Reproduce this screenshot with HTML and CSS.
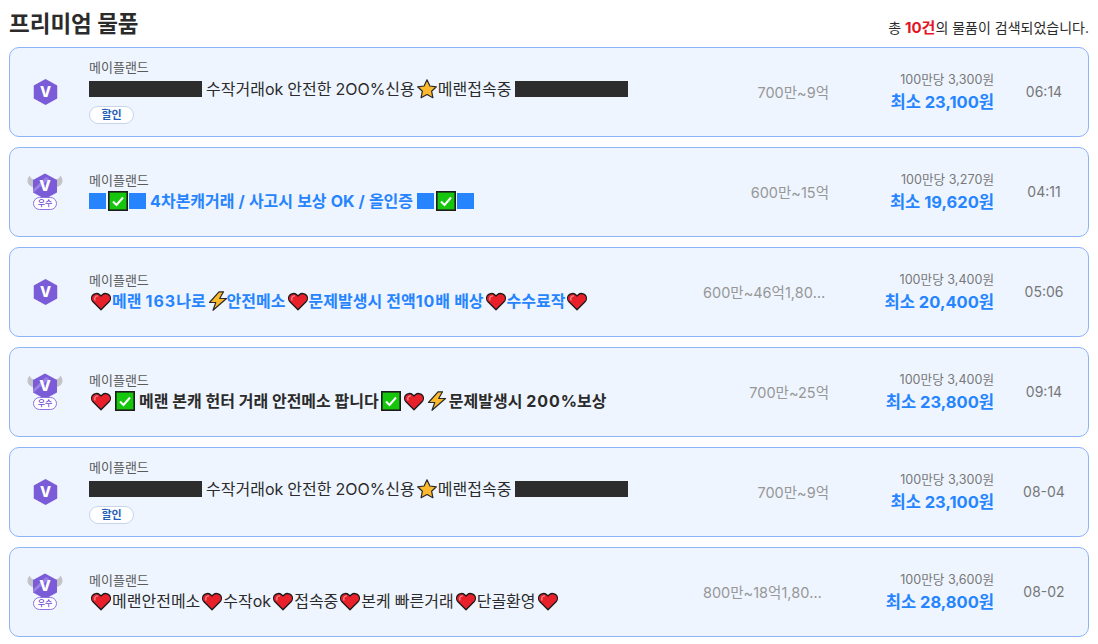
FILE: index.html
```html
<!DOCTYPE html>
<html lang="ko">
  <head>
    <meta charset="UTF-8" />
    <title>프리미엄 물품</title>
    <meta name="viewport" content="width=device-width, initial-scale=1.0" />
    <link rel="stylesheet" href="styles.css">
  </head>
  <body>
    <svg class="sprites" aria-hidden="true">
      <symbol id="hex" viewBox="0 0 26 28">
        <path d="M13 .5 25.200 7.200V20.800L13 27.500.8 20.800V7.200Z" fill="#7a5bd8"/>
        <text x="13" y="19.500" class="hex-v" text-anchor="middle">V</text>
      </symbol>
      <symbol id="hex-wing" viewBox="0 0 36 26">
        <path d="M7 14C3 14 .5 11 .5 7.500.5 5.500 1.500 3.500 3 2.500 3 4.500 4.500 6 7 6.500Z" fill="#c4c4c8"/>
        <path d="M29 14c4 0 6.500-3 6.500-6.500 0-2-1-4-2.500-5 0 2-1.500 3.500-4 4Z" fill="#c4c4c8"/>
        <path d="M18 .5 30 7V19.500L18 26 6 19.500V7Z" fill="#7a5bd8"/>
        <path d="M6 16.500 19 4l3.500 2L6 20Z" fill="#9a83e4"/>
        <text x="18" y="17.500" class="hex-v" text-anchor="middle">V</text>
      </symbol>
      <symbol id="star" viewBox="0 0 20 20">
        <path d="M10 .8 12.900 7l6.500.8-4.800 4.400 1.300 6.500L10 15.500l-5.900 3.200 1.300-6.500L.6 7.800 7.100 7Z" fill="#fdb92e" stroke="#2a2a2a" stroke-width="1.200" stroke-linejoin="round"/>
      </symbol>
      <symbol id="heart" viewBox="0 0 20 20">
        <path d="M10 18.800 2 10.800C.2 9 .2 6 1.700 4.200 3.400 2.300 6.500 1.900 8.400 3.500L10 5l1.600-1.500c1.900-1.600 5-1.200 6.700.7 1.500 1.800 1.500 4.800-.3 6.600Z" fill="#e8202a" stroke="#1a1a1a" stroke-width="1.300" stroke-linejoin="round"/>
        <path d="M4 9c-.8-2 .2-4 2.500-4.200" fill="none" stroke="#f58a8f" stroke-width="1.300" stroke-linecap="round"/>
      </symbol>
      <symbol id="bolt" viewBox="0 0 20 20">
        <path d="M11 .8 1.500 11.500h6.300L5 19.300 18.500 7.500h-6.800L15.500.8Z" fill="#fcb92c" stroke="#2a2a2a" stroke-width="1.200" stroke-linejoin="round"/>
      </symbol>
      <symbol id="check" viewBox="0 0 20 20">
        <rect x=".8" y=".8" width="18.400" height="18.400" fill="#16c60c" stroke="#1d1d1d" stroke-width="1.600"/>
        <path d="M5 10.500 8.500 14 15 6.500" fill="none" stroke="#fff" stroke-width="2"/>
      </symbol>
    </svg>

    <header class="list-head">
      <h2>프리미엄 물품</h2>
      <p>총 <b>10건</b>의 물품이 검색되었습니다.</p>
    </header>

    <main class="list">
      <article class="item">
        <div class="grade"><svg class="hex"><use href="#hex"/></svg></div>
        <div class="info">
          <div class="game">메이플랜드</div>
          <div class="title has-tag"><i class="block"></i> 수작거래ok 안전한 2OO%신용<svg class="emo"><use href="#star"/></svg>메랜접속중 <i class="block"></i></div>
          <div class="tags"><span class="tag">할인</span></div>
        </div>
        <div class="range">700만~9억</div>
        <div class="price"><span>100만당 3,300원</span><strong>최소 23,100원</strong></div>
        <div class="time">06:14</div>
      </article>

      <article class="item">
        <div class="grade good"><svg class="hex-wing"><use href="#hex-wing"/></svg><span class="good-label">우수</span></div>
        <div class="info">
          <div class="game">메이플랜드</div>
          <div class="title blue strong"><i class="sq"></i><svg class="emo"><use href="#check"/></svg><i class="sq"></i> 4차본캐거래 / 사고시 보상 OK / 올인증 <i class="sq"></i><svg class="emo"><use href="#check"/></svg><i class="sq"></i></div>
        </div>
        <div class="range">600만~15억</div>
        <div class="price"><span>100만당 3,270원</span><strong>최소 19,620원</strong></div>
        <div class="time">04:11</div>
      </article>

      <article class="item">
        <div class="grade"><svg class="hex"><use href="#hex"/></svg></div>
        <div class="info">
          <div class="game">메이플랜드</div>
          <div class="title blue strong"><svg class="emo"><use href="#heart"/></svg>메랜 <em>163</em>나로<svg class="emo bolt"><use href="#bolt"/></svg>안전메소<svg class="emo"><use href="#heart"/></svg>문제발생시 전액<em>10</em>배 배상<svg class="emo"><use href="#heart"/></svg>수수료작<svg class="emo"><use href="#heart"/></svg></div>
        </div>
        <div class="range">600만~46억1,800만</div>
        <div class="price"><span>100만당 3,400원</span><strong>최소 20,400원</strong></div>
        <div class="time">05:06</div>
      </article>

      <article class="item">
        <div class="grade good"><svg class="hex-wing"><use href="#hex-wing"/></svg><span class="good-label">우수</span></div>
        <div class="info">
          <div class="game">메이플랜드</div>
          <div class="title strong"><svg class="emo"><use href="#heart"/></svg><i class="gap"></i><svg class="emo"><use href="#check"/></svg><i class="gap wide"></i>메랜 본캐 헌터 거래 안전메소 팝니다<svg class="emo"><use href="#check"/></svg><svg class="emo"><use href="#heart"/></svg><svg class="emo bolt"><use href="#bolt"/></svg><i class="gap wide"></i>문제발생시 <em>200</em>%보상</div>
        </div>
        <div class="range">700만~25억</div>
        <div class="price"><span>100만당 3,400원</span><strong>최소 23,800원</strong></div>
        <div class="time">09:14</div>
      </article>

      <article class="item">
        <div class="grade"><svg class="hex"><use href="#hex"/></svg></div>
        <div class="info">
          <div class="game">메이플랜드</div>
          <div class="title has-tag"><i class="block"></i> 수작거래ok 안전한 2OO%신용<svg class="emo"><use href="#star"/></svg>메랜접속중 <i class="block"></i></div>
          <div class="tags"><span class="tag">할인</span></div>
        </div>
        <div class="range">700만~9억</div>
        <div class="price"><span>100만당 3,300원</span><strong>최소 23,100원</strong></div>
        <div class="time">08-04</div>
      </article>

      <article class="item">
        <div class="grade good"><svg class="hex-wing"><use href="#hex-wing"/></svg><span class="good-label">우수</span></div>
        <div class="info">
          <div class="game">메이플랜드</div>
          <div class="title"><svg class="emo"><use href="#heart"/></svg>메랜안전메소<svg class="emo"><use href="#heart"/></svg>수작ok<svg class="emo"><use href="#heart"/></svg>접속중<svg class="emo"><use href="#heart"/></svg>본케 빠른거래<svg class="emo"><use href="#heart"/></svg>단골환영<svg class="emo"><use href="#heart"/></svg></div>
        </div>
        <div class="range">800만~18억1,800만</div>
        <div class="price"><span>100만당 3,600원</span><strong>최소 28,800원</strong></div>
        <div class="time">08-02</div>
      </article>
    </main>
  </body>
</html>
```

FILE: styles.css
```css
/* --- Reset & base --- */
*, *::before, *::after {
  box-sizing: border-box;
  margin: 0;
  padding: 0;
}
html, body {
  height: 644px;
  overflow: hidden;
}
body {
  font-family: Inter, "Noto Sans CJK KR", sans-serif;
  color: #2b2b2b;
  background: #fff;
  padding: 0 9px;
}
.sprites {
  display: none;
}

/* --- Header --- */
.list-head {
  display: flex;
  justify-content: space-between;
  align-items: flex-end;
  height: 47px;
  padding-bottom: 9px;
}
.list-head h2 {
  font-size: 22.5px;
  font-weight: 700;
  line-height: 32px;
  margin-bottom: -2px;
}
.list-head p {
  font-size: 14px;
  line-height: 20px;
}
.list-head b {
  color: #e3141f;
  font-size: 15px;
  font-weight: 700;
}

/* --- Rows --- */
.list {
  display: flex;
  flex-direction: column;
  gap: 10px;
}
.item {
  display: flex;
  align-items: center;
  height: 90px;
  flex: none;
  background: #eef5ff;
  border: 1px solid #8db4f7;
  border-radius: 10px;
}
.grade {
  display: flex;
  flex-direction: column;
  align-items: center;
  width: 79px;
  padding-right: 9px;
}
.hex {
  width: 25px;
  height: 28px;
}
.hex-wing {
  width: 36px;
  height: 26px;
}
.hex-v {
  fill: #fff;
  font-size: 15px;
  font-weight: 800;
}
.good {
  margin-top: -1px;
}
.good-label {
  margin-top: -2px;
  width: 24px;
  height: 13px;
  border: 1px solid #8f73e0;
  border-radius: 7px;
  background: #fff;
  color: #6a49d2;
  font-size: 8px;
  font-weight: 500;
  line-height: 11px;
  text-align: center;
}
.info {
  flex: 1;
  min-width: 0;
}
.game {
  font-size: 13px;
  line-height: 18px;
  color: #5b5b5b;
}
.title {
  display: flex;
  align-items: center;
  font-size: 16px;
  line-height: 24px;
  white-space: pre;
  word-spacing: -0.5px;
}
.title em {
  font-style: normal;
  letter-spacing: 1px;
}
.has-tag {
  margin-top: 1px;
}
.strong {
  font-weight: 700;
  word-spacing: 0;
}
.blue {
  color: #2684ff;
  word-spacing: 0.3px;
}
.block {
  width: 113px;
  height: 16px;
  background: #2d2d2d;
}
.sq {
  width: 17px;
  height: 16px;
  background: #2684ff;
}
.gap {
  width: 1px;
}
.gap.wide {
  width: 3px;
}
.emo {
  width: 20px;
  height: 20px;
  flex: none;
  margin: 0 1px 0 2px;
}
.bolt {
  margin-right: -1px;
}
.tags {
  margin: 2px 0 6px;
  height: 18px;
}
.tag {
  display: inline-block;
  width: 45px;
  height: 18px;
  border: 1px solid #c5d5ee;
  border-radius: 9px;
  background: #fff;
  color: #1f5fb8;
  font-size: 11px;
  font-weight: 700;
  line-height: 16px;
  text-align: center;
}
.range {
  width: 126px;
  flex: none;
  padding-bottom: 2px;
  color: #979797;
  font-size: 14.5px;
  text-align: right;
  white-space: nowrap;
  overflow: hidden;
  text-overflow: ellipsis;
}
.price {
  display: flex;
  flex-direction: column;
  align-items: flex-end;
  width: 165px;
  flex: none;
  padding-top: 2px;
}
.price span {
  color: #777;
  font-size: 12.6px;
  line-height: 18px;
}
.price strong {
  color: #2684ff;
  font-size: 16.5px;
  font-weight: 700;
  line-height: 26px;
}
.time {
  width: 94px;
  flex: none;
  padding: 0 0 2px 6px;
  color: #777;
  font-size: 14px;
  text-align: center;
}
```
